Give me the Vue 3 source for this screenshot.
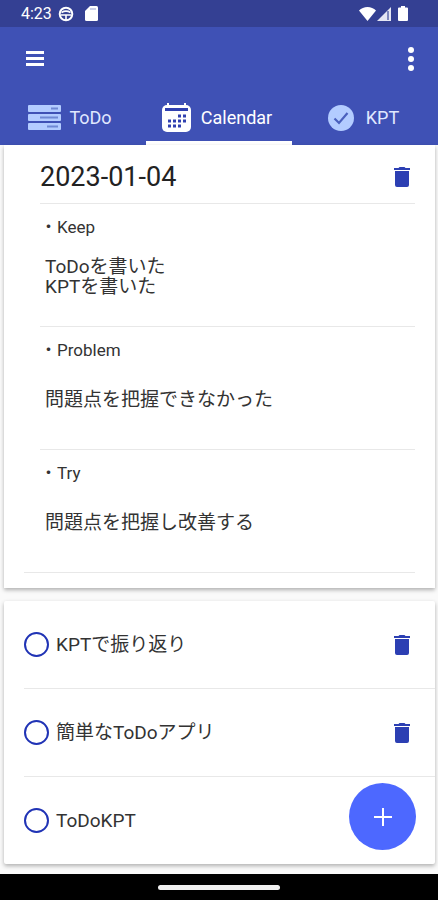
<!-- src/App.vue -->
<template>
  <div class="app">
    <header class="header">
      <div class="status-bar">
        <div class="status-group">
          <span class="clock">4:23</span>
          <svg class="status-icon" width="16" height="16" viewBox="0 0 16 16">
            <circle cx="8" cy="8" r="6.300" fill="none" stroke="#fff" stroke-width="2" />
            <path d="M3.500 6.500C6 5 10 5 12.500 6.500M3 9h10M8 9v5" fill="none" stroke="#fff" stroke-width="1.600" />
          </svg>
          <svg class="status-icon" width="13" height="15" viewBox="0 0 13 15">
            <path d="M5 0h6.500A1.500 1.500 0 0 1 13 1.500v12a1.500 1.500 0 0 1-1.500 1.500h-10A1.500 1.500 0 0 1 0 13.500V5z" fill="#fff" />
            <path d="M5 3h6" stroke="#b9bfdf" stroke-width="1.500" />
          </svg>
        </div>
        <div class="status-group right">
          <svg width="17" height="14" viewBox="0 0 17 14">
            <path d="M8.500 14L0 3.500C2.300 1.300 5.200 0 8.500 0S14.700 1.300 17 3.500z" fill="#fff" />
          </svg>
          <svg width="14" height="14" viewBox="0 0 14 14">
            <path d="M14 0v14H0z" fill="#e4e6f4" />
            <path d="M11 4v9" stroke="#5c68ab" stroke-width="1.500" />
          </svg>
          <svg class="battery" width="10" height="15" viewBox="0 0 10 15">
            <path d="M3 0h4v1.500h2a1 1 0 0 1 1 1V14a1 1 0 0 1-1 1H1a1 1 0 0 1-1-1V2.500a1 1 0 0 1 1-1h2z" fill="#fff" />
          </svg>
        </div>
      </div>

      <div class="toolbar">
        <button aria-label="メニュー">
          <svg width="18" height="15" viewBox="0 0 18 15">
            <path d="M0 1.500h18M0 7.500h18M0 13.500h18" stroke="#fff" stroke-width="3" />
          </svg>
        </button>
        <button aria-label="その他">
          <svg width="6" height="24" viewBox="0 0 6 24">
            <circle cx="3" cy="3" r="3" fill="#fff" />
            <circle cx="3" cy="12" r="3" fill="#fff" />
            <circle cx="3" cy="21" r="3" fill="#fff" />
          </svg>
        </button>
      </div>

      <nav class="tabs" role="tablist">
        <button
          v-for="tab in tabs"
          :key="tab"
          class="tab"
          :class="{ active: tab === currentTab }"
          role="tab"
          :aria-selected="tab === currentTab"
          @click="currentTab = tab"
        >
          <span class="tab-icon">
            <svg v-if="tab === 'ToDo'" width="33" height="26" viewBox="0 0 33 26">
              <rect x="0" y="0" width="33" height="7" rx="1" fill="#b3ccff" />
              <rect x="0" y="9" width="33" height="7" rx="1" fill="#b3ccff" />
              <rect x="0" y="18" width="33" height="7" rx="1" fill="#b3ccff" />
              <path d="M23 3.500h7M12 12.500h18M19 21.500h11" stroke="#6f88d4" stroke-width="2" />
            </svg>
            <svg v-else-if="tab === 'Calendar'" width="29" height="29" viewBox="0 0 29 29">
              <path d="M6 0v4M23 0v4" stroke="#fff" stroke-width="2" />
              <rect x="0" y="2" width="29" height="27" rx="5" fill="#fff" />
              <path d="M3 6.500h23" stroke="#3040b0" stroke-width="3" />
              <path
                d="M16 13h3M21 13h3M6 18h3M11 18h3M16 18h3M21 18h3M6 23h3M11 23h3M16 23h3"
                stroke="#3040b0"
                stroke-width="3"
              />
            </svg>
            <svg v-else width="26" height="26" viewBox="0 0 26 26">
              <circle cx="13" cy="13" r="13" fill="#b3ccff" />
              <path d="M6.500 13.500l4.500 4.500L19.500 8" fill="none" stroke="#4a60bd" stroke-width="2.200" />
            </svg>
          </span>
          {{ tab }}
        </button>
      </nav>
    </header>

    <main class="content">
      <section class="card kpt-card">
        <div class="kpt-header">
          <h1>{{ date }}</h1>
          <button aria-label="削除">
            <svg width="16" height="20" viewBox="0 0 16 20">
              <path d="M0 1h4.500l1-1h5l1 1H16v2H0zM1 4h14V18a2 2 0 0 1-2 2H3a2 2 0 0 1-2-2z" fill="#2c3fb3" />
            </svg>
          </button>
        </div>
        <div v-for="item in kpt" :key="item.label" class="kpt-item">
          <h2>・{{ item.label }}</h2>
          <p>{{ item.text }}</p>
        </div>
      </section>

      <ul class="card todo-card">
        <li v-for="(todo, idx) in todos" :key="idx" class="todo-item">
          <label>
            <input v-model="todo.done" type="checkbox" />
            <span>{{ todo.title }}</span>
          </label>
          <!-- 最後の行は追加ボタンと重なるので削除ボタンを出さない -->
          <button v-if="idx < todos.length - 1" aria-label="削除">
            <svg width="16" height="20" viewBox="0 0 16 20">
              <path d="M0 1h4.500l1-1h5l1 1H16v2H0zM1 4h14V18a2 2 0 0 1-2 2H3a2 2 0 0 1-2-2z" fill="#2c3fb3" />
            </svg>
          </button>
        </li>
      </ul>
    </main>

    <button class="fab" aria-label="追加">
      <svg width="18" height="18" viewBox="0 0 18 18">
        <path d="M9 0v18M0 9h18" stroke="#fff" stroke-width="2" />
      </svg>
    </button>

    <footer class="nav-bar">
      <span class="nav-handle"></span>
    </footer>
  </div>
</template>

<script setup>
import { ref } from 'vue'

const tabs = ['ToDo', 'Calendar', 'KPT']
const currentTab = ref('Calendar')

const date = '2023-01-04'

const kpt = [
  { label: 'Keep', text: 'ToDoを書いた\nKPTを書いた' },
  { label: 'Problem', text: '問題点を把握できなかった' },
  { label: 'Try', text: '問題点を把握し改善する' }
]

const todos = ref([
  { title: 'KPTで振り返り', done: false },
  { title: '簡単なToDoアプリ', done: false },
  { title: 'ToDoKPT', done: false }
])
</script>

<style>
body {
  margin: 0;
  background: #fafafa;
}
</style>

<style scoped>
.app {
  display: flex;
  flex-direction: column;
  min-height: 100vh;
  font-family: Roboto, "Noto Sans CJK JP", sans-serif;
  color: #333;
}

button {
  padding: 0;
  border: none;
  background: none;
  font-family: inherit;
  cursor: pointer;
}

svg {
  display: block;
}

.header {
  background: #3f51b5;
  color: #fff;
}

.status-bar {
  display: flex;
  align-items: center;
  justify-content: space-between;
  height: 27px;
  padding: 0 30px 0 21px;
  background: #344093;
}

.status-group {
  display: flex;
  align-items: center;
}

.status-group.right {
  gap: 1px;
}

.clock {
  font-size: 16px;
}

.status-icon {
  margin-left: 6px;
}

.status-icon + .status-icon {
  margin-left: 11px;
}

.battery {
  margin-left: 6px;
}

.toolbar {
  display: flex;
  align-items: center;
  justify-content: space-between;
  height: 63px;
  padding: 0 24px 0 26px;
}

.tabs {
  display: grid;
  grid-template-columns: repeat(3, 1fr);
}

.tab {
  display: flex;
  align-items: center;
  justify-content: center;
  gap: 8px;
  height: 55px;
  padding-right: 6px;
  border-bottom: 4px solid transparent;
  border-top: 4px solid transparent;
  color: #e0e8ff;
  font-size: 18px;
}

.tab.active {
  border-bottom-color: #fff;
  color: #fff;
}

.tab-icon {
  display: flex;
  justify-content: center;
  width: 33px;
}

.content {
  display: flex;
  flex-direction: column;
  gap: 13px;
  padding: 0 3px 10px 4px;
}

.card {
  margin: 0;
  background: #fff;
  box-shadow: 0 2px 4px rgba(0, 0, 0, 0.3);
}

.kpt-card {
  padding-bottom: 15px;
}

.kpt-header,
.kpt-item {
  margin: 0 20px 0 36px;
  border-bottom: 1px solid #e8e8e8;
}

.kpt-header {
  display: flex;
  align-items: center;
  justify-content: space-between;
  height: 52px;
  padding: 6px 5px 0 0;
}

.kpt-header h1 {
  margin: 0;
  color: #222;
  font-size: 27px;
  font-weight: 400;
}

.kpt-item {
  padding-top: 13px;
}

.kpt-item:last-child {
  margin-left: 20px;
  padding-left: 16px;
}

.kpt-item h2 {
  margin: 0;
  font-size: 17px;
  font-weight: 400;
  line-height: 20px;
}

.kpt-item p {
  display: flex;
  align-items: center;
  min-height: 79px;
  margin: 0;
  padding: 0 5px 10px;
  font-size: 19px;
  line-height: 20px;
  white-space: pre-line;
}

.todo-card {
  padding: 0;
  border-radius: 2px;
  list-style: none;
}

.todo-item {
  display: flex;
  align-items: center;
  justify-content: space-between;
  height: 87px;
  margin-left: 20px;
  padding-right: 25px;
}

.todo-item + .todo-item {
  border-top: 1px solid #e8e8e8;
}

.todo-item label {
  display: flex;
  align-items: center;
  gap: 7px;
  font-size: 19px;
  line-height: 20px;
}

.todo-item input {
  width: 25px;
  height: 25px;
  margin: 0;
  border: 2px solid #2033b5;
  border-radius: 50%;
  appearance: none;
}

.todo-item input:checked {
  background: #2033b5;
}

.fab {
  position: fixed;
  right: 22px;
  bottom: 50px;
  display: flex;
  align-items: center;
  justify-content: center;
  width: 67px;
  height: 67px;
  border-radius: 50%;
  background: #4d68ff;
}

.nav-bar {
  display: flex;
  align-items: center;
  justify-content: center;
  height: 26px;
  margin-top: auto;
  background: #000;
}

.nav-handle {
  width: 122px;
  height: 5px;
  border-radius: 3px;
  background: #f0f0f0;
}
</style>
